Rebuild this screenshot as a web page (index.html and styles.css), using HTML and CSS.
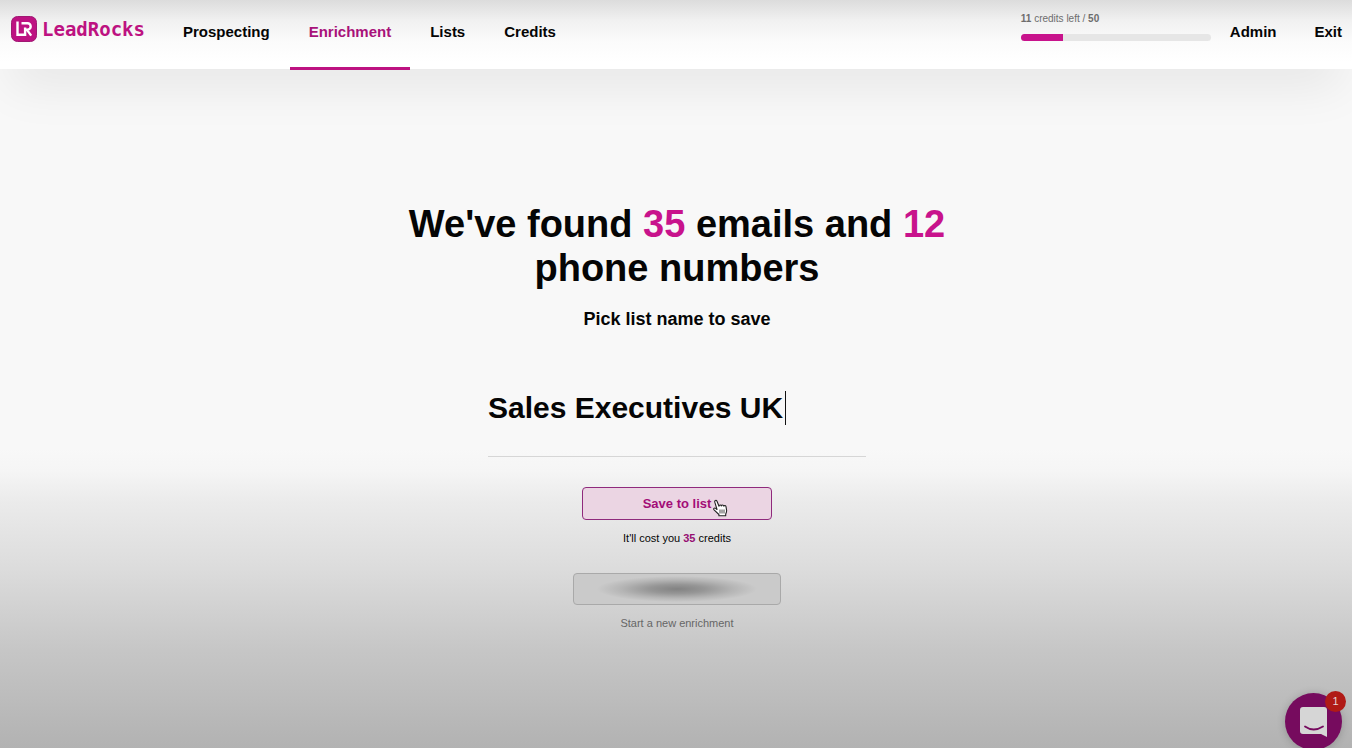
FILE: index.html
```html
<!DOCTYPE html>
<html lang="en">
<head>
<meta charset="utf-8">
<meta name="viewport" content="width=device-width, initial-scale=1">
<title>LeadRocks – Enrichment</title>
<link rel="stylesheet" href="styles.css">
</head>
<body>
<header class="header">
  <a class="logo" href="#">
    <svg class="logo-mark" viewBox="0 0 26 26" aria-hidden="true">
      <rect x="0.5" y="0.5" width="25" height="25" rx="6" fill="#bd1281" stroke="#a01873"/>
      <path d="M6.500 5.500v13.200h7.600V11.500M10.500 7.200h6a3.200 3.200 0 0 1 0 6.400h-1.500M15.800 13.600l4.400 6" fill="none" stroke="#fff" stroke-width="2.400"/>
    </svg>
    <span class="logo-text">LeadRocks</span>
  </a>
  <nav class="nav">
    <a class="nav-link" href="#">Prospecting</a>
    <a class="nav-link active" href="#" aria-current="page">Enrichment</a>
    <a class="nav-link" href="#">Lists</a>
    <a class="nav-link" href="#">Credits</a>
  </nav>
  <div class="account">
    <div class="credits">
      <div class="credits-label"><b>11</b> credits left / <b>50</b></div>
      <div class="meter"><div class="meter-fill" style="width: 22%"></div></div>
    </div>
    <a class="nav-link" href="#">Admin</a>
    <a class="nav-link last" href="#">Exit</a>
  </div>
</header>
<main class="main">
  <h1 class="title">We've found <span class="accent">35</span> emails and <span class="accent">12</span> phone numbers</h1>
  <label class="subtitle" for="list-name">Pick list name to save</label>
  <div class="field">
    <input class="list-name" id="list-name" type="text" value="Sales Executives UK">
    <span class="caret"></span>
  </div>
  <button class="save" type="button">Save to list
    <svg class="pointer" viewBox="0 0 16 18" aria-hidden="true">
      <path d="M5 10.500 2.800 3.200C2.300 1.300 4.300.6 5 2.300L7 7.200C7.100 5.600 9 5.500 9.400 7c.3-1.300 2-1.300 2.400.2.500-1.100 2-.8 2.200.5l.6 3.600c.2 1.500-.4 2.600-.9 3.700v1.700H6.900v-1.200L2.300 11.200C.9 9.700 2.300 8.300 3.700 9.400z" fill="#fff" stroke="#222" stroke-width="1.100" stroke-linejoin="round"/>
      <path d="M8 10.500v4M10 10.500v4M12 10.500v4" stroke="#333" stroke-width="0.900"/>
    </svg>
  </button>
  <p class="cost">It'll cost you <b class="cost-value">35</b> credits</p>
  <button class="secondary" type="button" aria-label="New enrichment"><span class="smudge"></span></button>
  <a class="restart" href="#">Start a new enrichment</a>
</main>
<button class="chat" type="button" aria-label="Open chat, 1 unread message">
  <svg class="chat-icon" viewBox="0 0 28 32" aria-hidden="true">
    <path d="M3 1h21A3 3 0 0 1 27 4V31l-6-3H3A3 3 0 0 1 0 25V4A3 3 0 0 1 3 1z" fill="#d6d6d6"/>
    <path d="M5 20.500q8.500 6 18 0" fill="none" stroke="#760b5e" stroke-width="1.800" stroke-linecap="round"/>
  </svg>
  <span class="badge">1</span>
</button>
</body>
</html>
```

FILE: styles.css
```css
* { box-sizing: border-box; }

body {
  margin: 0;
  min-height: 100vh;
  font-family: "Liberation Sans", Arial, sans-serif;
  color: #050505;
  background: linear-gradient(#f8f8f8 60%, #f5f5f5 63%, #ebebeb 67%, #dcdcdc 76%, #c6c6c6 87%, #b2b2b2 100%);
}

a { color: inherit; text-decoration: none; }

.header {
  display: flex;
  height: 69px;
  padding: 0 10px 0 11px;
  background: linear-gradient(#dcdcdc, #f1f1f1 30%, #fbfbfb 60%, #fff 90%);
  box-shadow: 0 26px 50px -10px rgba(0, 0, 0, 0.08);
}

.logo {
  display: flex;
  align-items: center;
  gap: 5px;
  height: 58px;
  width: 153px;
}

.logo-mark { width: 26px; height: 26px; }

.logo-text {
  font: bold 19px "DejaVu Sans Mono", monospace;
  color: #bd1281;
}

.nav { display: flex; gap: 1px; }

.nav-link {
  padding: 0 19px;
  font-size: 15px;
  font-weight: bold;
  line-height: 63px;
}

.nav-link.active {
  height: 70px;
  color: #a8127a;
  border-bottom: 3px solid #bd1281;
}

.nav-link.last { padding-right: 0; }

.account { display: flex; margin-left: auto; }

.credits { width: 190px; padding-top: 12px; }

.credits-label {
  font-size: 10px;
  line-height: 14px;
  color: #6d6d6d;
}

.meter {
  height: 7px;
  margin-top: 8px;
  border-radius: 4px;
  overflow: hidden;
  background: #e6e6e6;
}

.meter-fill { height: 100%; background: #c8138c; }

.main {
  display: flex;
  flex-direction: column;
  align-items: center;
  padding: 133px 20px 40px 22px;
}

.title {
  max-width: 580px;
  margin: 0;
  font-size: 38px;
  line-height: 44px;
  text-align: center;
}

.accent { color: #c8138c; }

.subtitle {
  margin-top: 17px;
  font-size: 18px;
  font-weight: bold;
  line-height: 24px;
}

.field {
  position: relative;
  width: 378px;
  max-width: 100%;
  margin-top: 42px;
}

.list-name {
  display: block;
  width: 100%;
  height: 84px;
  padding: 0 0 14px;
  border: 0;
  border-bottom: 1px solid #d6d6d6;
  background: none;
  font: bold 30px "Liberation Sans", Arial, sans-serif;
  color: inherit;
  outline: none;
}

.caret {
  position: absolute;
  top: 18px;
  left: 297px;
  width: 1px;
  height: 34px;
  background: #111;
}

.save {
  position: relative;
  width: 190px;
  height: 33px;
  margin-top: 30px;
  padding: 0;
  border: 1px solid #8f2a7c;
  border-radius: 4px;
  background: #ebd5e3;
  font: bold 13px "Liberation Sans", Arial, sans-serif;
  color: #a30d77;
  cursor: pointer;
}

.pointer {
  position: absolute;
  top: 11px;
  left: 129px;
  width: 16px;
  height: 18px;
}

.cost {
  margin: 10px 0 0;
  font-size: 11px;
  line-height: 16px;
}

.cost-value { color: #960f72; }

.secondary {
  display: flex;
  align-items: center;
  justify-content: center;
  width: 208px;
  height: 32px;
  margin-top: 27px;
  padding: 0;
  border: 1px solid #a9a9a9;
  border-radius: 4px;
  background: #cacaca;
}

.smudge {
  width: 160px;
  height: 26px;
  background: radial-gradient(closest-side, #828282, #969696 35%, #b5b5b5 70%, #cacaca);
}

.restart {
  margin-top: 10px;
  font-size: 11px;
  line-height: 16px;
  color: #666;
}

.chat {
  position: fixed;
  right: 10px;
  bottom: -2px;
  display: grid;
  place-items: center;
  width: 57px;
  height: 57px;
  padding: 0;
  border: 0;
  border-radius: 50%;
  background: #760b5e;
  box-shadow: 0 1px 8px rgba(0, 0, 0, 0.2);
}

.chat-icon { width: 28px; height: 32px; }

.badge {
  position: absolute;
  top: -2px;
  right: -4px;
  width: 21px;
  height: 21px;
  border-radius: 50%;
  background: #b01a16;
  font: 11px/21px "Liberation Sans", Arial, sans-serif;
  color: #e6d6d6;
}
```
